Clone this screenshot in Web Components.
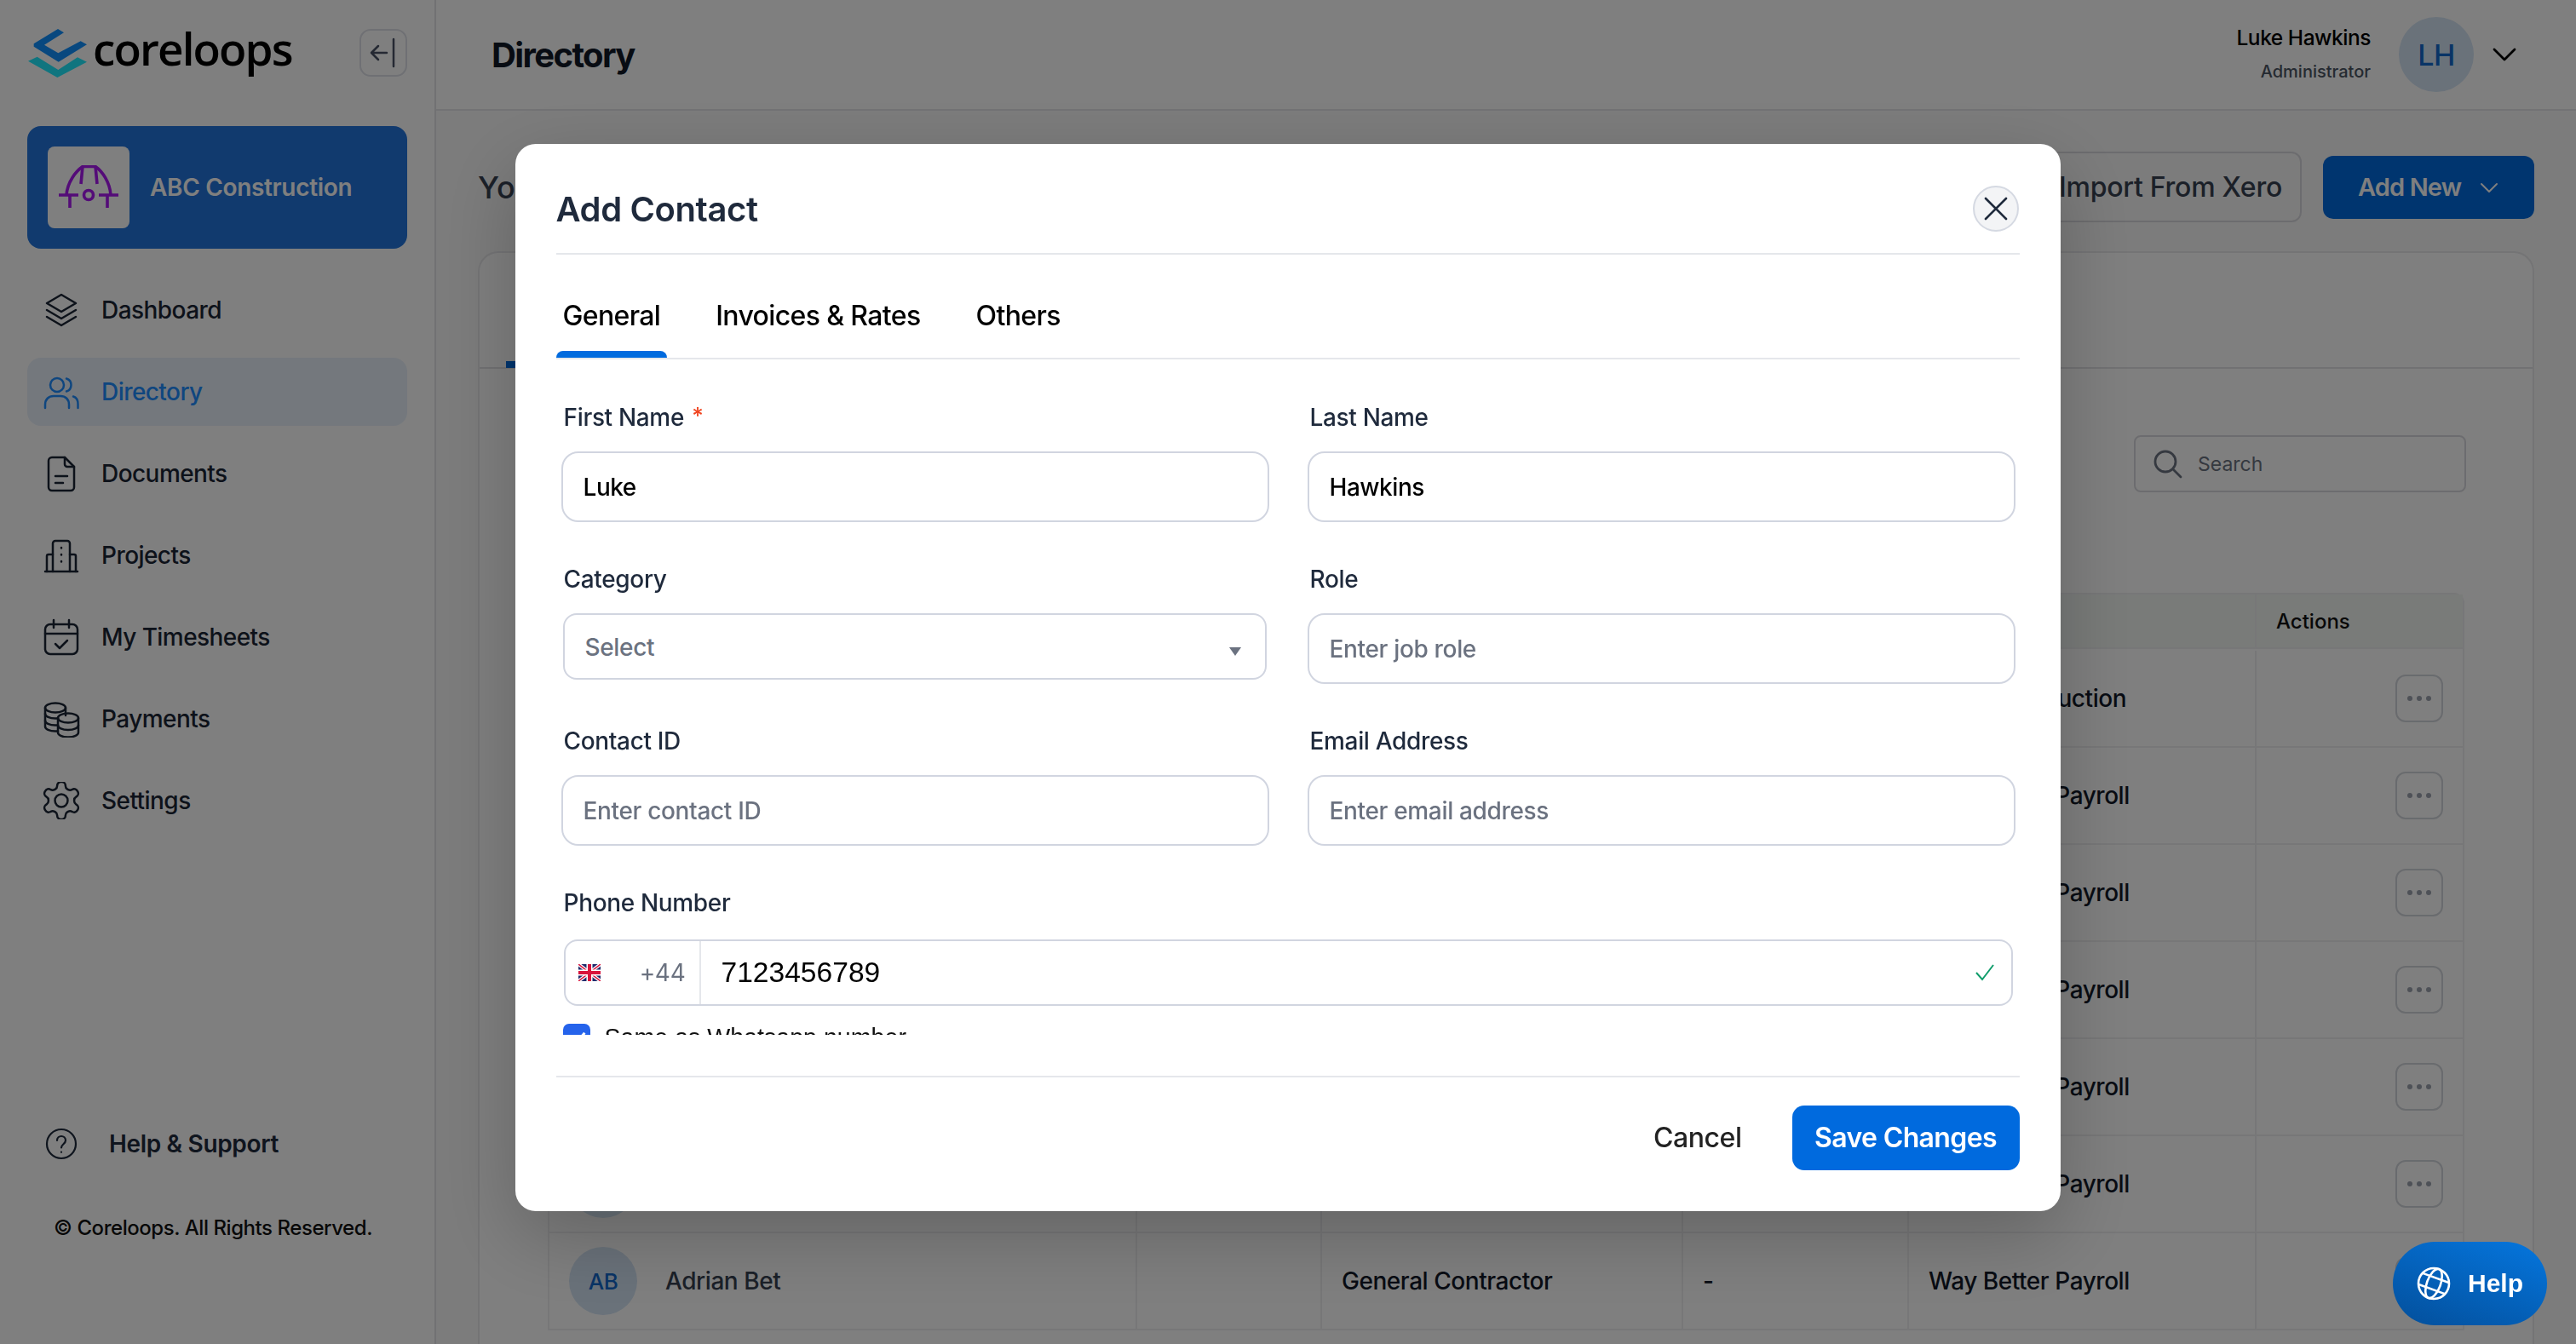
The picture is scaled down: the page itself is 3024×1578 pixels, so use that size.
<!DOCTYPE html>
<html>
<head>
<meta charset="utf-8">
<title>Directory</title>
<style>
  html, body { margin: 0; height: 100%; overflow: hidden; }
  body {
    background: #fff;
    font-family: Inter, "Liberation Sans", sans-serif;
    letter-spacing: -0.45px;
    color: #1f2937;
  }
</style>
</head>
<body>
<app-shell>
  <side-bar slot="side"></side-bar>
  <top-bar slot="top"></top-bar>
  <directory-view slot="main"></directory-view>
</app-shell>
<contact-modal></contact-modal>
<help-button></help-button>

<script>
// every class just clones its own markup into an open shadow root
function shadow(el, html) {
  el.attachShadow({ mode: "open" }).innerHTML = html;
}

const ICONS = {
  dashboard: '<path d="M22 4 39 14 22 24 5 14Z"/><path d="M5 22l17 10 17-10"/><path d="M5 30l17 10 17-10"/>',
  users: '<circle cx="17" cy="14" r="8"/><path d="M28 6.500c3.500 1 5.500 4 5.500 7.500s-2 6.500-5.500 7.500"/><path d="M3 41v-4c0-6 4-10 10-10h8c6 0 10 4 10 10v4"/><path d="M36 27.500c3.500 1 5.500 4.500 5.500 9v4.500"/>',
  doc: '<path d="M11 3h15l11 11v24a4 4 0 0 1-4 4H11a4 4 0 0 1-4-4V7a4 4 0 0 1 4-4Z"/><path d="M26 3v8a3 3 0 0 0 3 3h8"/><path d="M15 25h14M15 33h9"/>',
  building: '<path d="M3 41h38"/><path d="M12 41V8a3 3 0 0 1 3-3h14a3 3 0 0 1 3 3v33"/><path d="M12 21H7a2 2 0 0 0-2 2v18M32 21h5a2 2 0 0 1 2 2v18"/><path d="M22 13v.5M22 21v.5M22 29v.5"/>',
  calendar: '<rect x="3" y="7" width="38" height="35" rx="6"/><path d="M3 18h38M13 2v9M31 2v9"/><path d="M15 30l5 5 9-9"/>',
  coins: '<ellipse cx="15" cy="9" rx="12" ry="5.500"/><path d="M3 9v22c0 3 5 5.500 12 5.500 1 0 2 0 3-.1"/><path d="M3 16c0 3 5 5.500 12 5.500 1 0 2 0 3-.2M3 24c0 3 5 5.500 12 5.500 1 0 2 0 3-.2M27 9v9"/><ellipse cx="30" cy="21" rx="12" ry="5.500"/><path d="M18 21v17c0 3 5 5.500 12 5.500s12-2.500 12-5.500V21"/><path d="M18 29.500c0 3 5 5.500 12 5.500s12-2.500 12-5.500"/>',
  gear: '<g transform="translate(-4.400 -4.400) scale(2.200)"><path d="M12.220 2h-.44a2 2 0 0 0-2 2v.18a2 2 0 0 1-1 1.730l-.43.25a2 2 0 0 1-2 0l-.15-.08a2 2 0 0 0-2.730.73l-.22.38a2 2 0 0 0 .73 2.730l.15.1a2 2 0 0 1 1 1.720v.51a2 2 0 0 1-1 1.740l-.15.09a2 2 0 0 0-.73 2.730l.22.38a2 2 0 0 0 2.730.73l.15-.08a2 2 0 0 1 2 0l.43.25a2 2 0 0 1 1 1.730V20a2 2 0 0 0 2 2h.44a2 2 0 0 0 2-2v-.18a2 2 0 0 1 1-1.730l.43-.25a2 2 0 0 1 2 0l.15.08a2 2 0 0 0 2.730-.73l.22-.39a2 2 0 0 0-.73-2.730l-.15-.08a2 2 0 0 1-1-1.740v-.5a2 2 0 0 1 1-1.740l.15-.09a2 2 0 0 0 .73-2.730l-.22-.38a2 2 0 0 0-2.730-.73l-.15.08a2 2 0 0 1-2 0l-.43-.25a2 2 0 0 1-1-1.730V4a2 2 0 0 0-2-2z" stroke-width="1.140"/><circle cx="12" cy="12" r="3.400" stroke-width="1.140"/></g>'
};

class AppShell extends HTMLElement {
  constructor() {
    super();
    shadow(this, `
      <style>
        :host { display: grid; grid-template-columns: 512px 1fr; grid-template-rows: 130px 1fr; width: 3024px; height: 1578px; overflow: hidden; }
        .side { grid-row: 1 / 3; min-height: 0; }
        .main { min-width: 0; min-height: 0; background: #f8f8f8; overflow: hidden; }
      </style>
      <div class="side"><slot name="side"></slot></div>
      <div><slot name="top"></slot></div>
      <div class="main"><slot name="main"></slot></div>`);
  }
}

class NavItem extends HTMLElement {
  constructor() {
    super();
    const ic = this.getAttribute("icon");
    shadow(this, `
      <style>
        :host { display: flex; align-items: center; gap: 25px; height: 80px; padding-left: 18px; border-radius: 16px; font-size: 28px; font-weight: 450; color: #1b2535; letter-spacing: -0.02em; }
        :host([active]) { background: #e9f1fb; color: #1e8cff; font-weight: 500; }
        svg { width: 44px; height: 44px; flex: none; fill: none; stroke: currentColor; stroke-width: 2.500; stroke-linecap: round; stroke-linejoin: round; }
      </style>
      <svg viewBox="0 0 44 44">${ICONS[ic]}</svg><slot></slot>`);
  }
}

class SideBar extends HTMLElement {
  constructor() {
    super();
    shadow(this, `
      <style>
        :host { display: flex; flex-direction: column; box-sizing: border-box; height: 1578px; padding: 34px 32px 0; background: #fff; border-right: 2px solid #e3e3e6; color: #1b2535; }
        .brand { display: flex; align-items: flex-start; height: 57px; }
        .mark { width: 69px; height: 57px; flex: none; margin-left: 1px; }
        .word { font-family: "Open Sans", sans-serif; font-size: 53px; line-height: 46px; font-weight: 600; color: #000; letter-spacing: -0.035em; margin-left: 7px; }
        .collapse { margin-left: auto; box-sizing: border-box; width: 56px; height: 56px; border: 2px solid #dfe1e8; border-radius: 13px; display: flex; align-items: center; justify-content: center; color: #4a5266; }
        .collapse svg { width: 34px; height: 36px; fill: none; stroke: currentColor; stroke-width: 2.500; stroke-linecap: round; stroke-linejoin: round; }
        .company { margin-top: 57px; height: 144px; background: #2274dc; border-radius: 16px; display: flex; align-items: center; gap: 24px; padding-left: 24px; color: #fff; font-size: 28px; font-weight: 600; letter-spacing: -0.012em; }
        .tile { width: 96px; height: 96px; background: #fff; border-radius: 8px; display: flex; align-items: center; justify-content: center; }
        .tile svg { width: 72px; height: 52px; fill: none; stroke: #a818f0; stroke-width: 3.600; }
        nav { display: flex; flex-direction: column; gap: 16px; margin-top: 32px; }
        .foot { margin-top: auto; padding-bottom: 122px; }
        .help { display: flex; align-items: center; gap: 37px; padding-left: 21px; font-size: 28px; font-weight: 600; color: #1f2a3c; letter-spacing: -0.012em; }
        .help svg { width: 38px; height: 38px; fill: none; stroke: currentColor; stroke-width: 2.200; stroke-linecap: round; }
        .copy { margin-top: 65px; padding-left: 31px; font-size: 24px; font-weight: 450; color: #111; white-space: nowrap; }
      </style>
      <div class="brand">
        <svg class="mark" viewBox="40 42 207 171">
          <path fill="#1090ff" d="M145 42 166 55 97 98 146 127 225 85 247 97 147 158 60 104V94Z"/>
          <path fill="#20eaff" d="M72 140 146 186 214 142 247 158 143 213 40 155Z"/>
        </svg>
        <span class="word">coreloops</span>
        <div class="collapse"><svg viewBox="0 0 34 36"><path d="M29 2v32"/><path d="M21 18H3M11 10l-8 8 8 8"/></svg></div>
      </div>
      <div class="company">
        <div class="tile">
          <svg viewBox="0 0 72 52">
            <path d="M10 35C11 20 21 7 29 1.500H44C52 7 61 20 62 35"/>
            <path d="M29 1.500 27 22M44 1.500 46 22"/>
            <path d="M1 35H24M48 35H71"/>
            <circle cx="36" cy="35" r="5.500"/>
            <path d="M14 36V50M58 36V50"/>
          </svg>
        </div>
        <span>ABC Construction</span>
      </div>
      <nav>
        <nav-item icon="dashboard">Dashboard</nav-item>
        <nav-item icon="users" active>Directory</nav-item>
        <nav-item icon="doc">Documents</nav-item>
        <nav-item icon="building">Projects</nav-item>
        <nav-item icon="calendar">My Timesheets</nav-item>
        <nav-item icon="coins">Payments</nav-item>
        <nav-item icon="gear">Settings</nav-item>
      </nav>
      <div class="foot">
        <div class="help">
          <svg viewBox="0 0 38 38"><circle cx="19" cy="19" r="17"/><path d="M14 15c0-3 2.500-5 5-5s5 2 5 5c0 4-5 4.500-5 8.500"/><path d="M19 28.500v.3"/></svg>
          <span>Help &amp; Support</span>
        </div>
        <div class="copy">© Coreloops. All Rights Reserved.</div>
      </div>`);
  }
}

class TopBar extends HTMLElement {
  constructor() {
    super();
    shadow(this, `
      <style>
        :host { display: flex; align-items: center; box-sizing: border-box; height: 130px; padding: 0 69px 0 65px; background: #fff; border-bottom: 2px solid #e5e5e8; }
        h1 { margin: 0; font-size: 40px; font-weight: 650; color: #111827; letter-spacing: -0.04em; }
        .who { margin-left: auto; text-align: right; }
        .name { font-size: 24.500px; font-weight: 500; color: #000; line-height: 32px; }
        .role { font-size: 20px; font-weight: 450; color: #4b5563; line-height: 32px; margin-top: 8px; letter-spacing: 0; }
        .av { width: 88px; height: 88px; border-radius: 50%; background: #d4e4f4; color: #1268cc; font-size: 34px; font-weight: 450; display: flex; align-items: center; justify-content: center; margin-left: 33px; }
        svg { width: 30px; height: 20px; margin-left: 21px; fill: none; stroke: #000; stroke-width: 2.800; stroke-linecap: round; stroke-linejoin: round; }
      </style>
      <h1>Directory</h1>
      <div class="who"><div class="name">Luke Hawkins</div><div class="role">Administrator</div></div>
      <div class="av">LH</div>
      <svg viewBox="0 0 30 20"><path d="M3 4 15 16 27 4"/></svg>`);
  }
}

class RowAction extends HTMLElement {
  constructor() {
    super();
    shadow(this, `
      <style>
        :host { display: flex; align-items: center; justify-content: center; gap: 5px; box-sizing: border-box; width: 56px; height: 56px; border: 2px solid #d3d6dc; border-radius: 12px; }
        i { width: 6px; height: 6px; border-radius: 50%; background: #9ca3af; }
      </style>
      <i></i><i></i><i></i>`);
  }
}

class DirectoryView extends HTMLElement {
  constructor() {
    super();
    const rows = ["ABC Construction", "Way Better Payroll", "Way Better Payroll", "Way Better Payroll", "Way Better Payroll", "Way Better Payroll"];
    const cells = (a, b, c, d, e) => `
      <div class="c first">${a}</div><div class="c"></div><div class="c">${b}</div><div class="c">${c}</div><div class="c">${d}</div><div class="c act">${e}</div>`;
    const body = rows.map(r => cells('<span class="ava"></span>', "", "", r, "<row-action></row-action>")).join("");
    shadow(this, `
      <style>
        :host { display: block; padding: 48px 49px 0 49px; height: 1448px; box-sizing: border-box; overflow: hidden; }
        .head { display: flex; align-items: center; height: 83px; }
        .lead { font-size: 36px; font-weight: 450; color: #374151; letter-spacing: 0; }
        .import { margin-left: auto; box-sizing: border-box; width: 310px; height: 83px; padding-left: 23px; display: flex; align-items: center; border: 2px solid #d9d9de; border-radius: 12px; font-size: 32px; font-weight: 500; color: #374151; letter-spacing: -0.008em; }
        .add { margin-left: 25px; box-sizing: border-box; width: 248px; height: 74px; padding-left: 41px; gap: 22px; display: flex; align-items: center; background: #006ade; color: #fff; border-radius: 12px; font-size: 29px; font-weight: 600; letter-spacing: -0.03em; }
        .add svg { width: 22px; height: 14px; fill: none; stroke: #fff; stroke-width: 2; stroke-linecap: round; stroke-linejoin: round; }
        .card { margin-top: 34px; border: 2px solid #e8e8eb; border-bottom: 0; border-radius: 24px 24px 0 0; height: 1300px; background: #fff; }
        .tabs { height: 134px; border-bottom: 2px solid #e2e2e6; position: relative; }
        .tabs b { position: absolute; left: 31px; bottom: -1px; width: 120px; height: 8px; background: #006ade; }
        .search { box-sizing: border-box; width: 390px; height: 67px; margin: 78px 78px 0 auto; border: 2px solid #d9d9de; border-radius: 8px; display: flex; align-items: center; gap: 17px; padding-left: 20px; font-size: 23px; color: #6b7280; letter-spacing: 0; }
        .search svg { width: 36px; height: 36px; fill: none; stroke: #6b7280; stroke-width: 2.800; stroke-linecap: round; }
        .grid { margin: 118px 0 0 80px; width: max-content; display: grid; grid-template-columns: 690px 217px 424px 265px 408px 242px; grid-template-rows: 66px; grid-auto-rows: 114px; border: 2px solid #efeff1; border-bottom: 0; border-radius: 12px 12px 0 0; font-size: 28px; font-weight: 450; color: #111827; }
        .th { background: #f2f6f3; height: 64px; display: flex; align-items: center; font-size: 24px; color: #111; border-bottom: 2px solid #efeff1; border-right: 2px solid #efeff1; padding-left: 23px; box-sizing: border-box; letter-spacing: 0; }
        .th:nth-child(6) { border-right: 0; }
        .c { display: flex; align-items: center; padding-left: 23px; border-right: 2px solid #efeff1; border-bottom: 2px solid #efeff1; box-sizing: border-box; }
        .c:nth-child(6n) { border-right: 0; }
        .first { gap: 33px; }
        .act { justify-content: flex-end; padding-right: 23px; }
        .ava { width: 80px; height: 80px; flex: none; border-radius: 50%; background: #d4e4f4; color: #1268cc; font-size: 26px; display: flex; align-items: center; justify-content: center; }
        .nm { color: #374151; }
      </style>
      <div class="head">
        <span class="lead">Your</span>
        <div class="import">Import From Xero</div>
        <div class="add">Add New <svg viewBox="0 0 22 14"><path d="M2 3 11 12 20 3"/></svg></div>
      </div>
      <div class="card">
        <div class="tabs"><b></b></div>
        <div class="search">
          <svg viewBox="0 0 36 36"><circle cx="15" cy="15" r="12"/><path d="M24 24l9 9"/></svg>
          Search
        </div>
        <div class="grid">
          <div class="th"></div><div class="th"></div><div class="th"></div><div class="th"></div><div class="th"></div><div class="th">Actions</div>
          ${body}
          ${cells('<span class="ava">AB</span><span class="nm">Adrian Bet</span>', "General Contractor", "-", "Way Better Payroll", "<row-action></row-action>")}
        </div>
      </div>`);
  }
}

class FormField extends HTMLElement {
  constructor() {
    super();
    const label = this.getAttribute("label");
    const value = this.getAttribute("value");
    const hint = this.getAttribute("hint");
    const req = this.hasAttribute("required") ? ' <span class="req">*</span>' : "";
    const kind = this.getAttribute("kind");
    shadow(this, `
      <style>
        :host { display: block; min-width: 0; }
        label { display: block; height: 35px; line-height: 35px; margin: 0 0 22px 3px; font-size: 28px; font-weight: 500; color: #1f2a3c; letter-spacing: -0.012em; }
        .req { color: #f0441f; font-size: 26px; line-height: 0; vertical-align: 3px; margin-left: 2px; }
        .box { box-sizing: border-box; height: 83px; display: flex; align-items: center; padding-left: 24px; border: 2px solid #d1d5e0; border-radius: 20px; font-size: 28px; background: #fff; }
        .val { color: #000; font-weight: 450; }
        .hint { color: #6b7280; font-weight: 450; letter-spacing: -0.012em; }
        .sel { height: 78px; margin: 3px 3px 0 2px; padding-top: 2px; border-radius: 16px; position: relative; }
        .sel i { position: absolute; right: 28px; top: 38px; border: 7px solid transparent; border-top: 10px solid #6b7280; border-bottom: 0; }
      </style>
      <label>${label}${req}</label>
      <div class="box ${kind === "select" ? "sel" : ""}">
        ${value ? `<span class="val">${value}</span>` : `<span class="hint">${hint}</span>`}
        ${kind === "select" ? "<i></i>" : ""}
      </div>`);
  }
}

class PhoneField extends HTMLElement {
  constructor() {
    super();
    shadow(this, `
      <style>
        :host { display: block; grid-column: 1 / 3; }
        label { display: block; height: 35px; line-height: 35px; margin: 0 0 25px 3px; font-size: 28px; font-weight: 500; color: #1f2a3c; letter-spacing: -0.012em; }
        .box { box-sizing: border-box; height: 78px; margin: 0 3px 0 3px; display: flex; align-items: center; border: 2px solid #d1d5e0; border-radius: 16px; }
        .cc { box-sizing: border-box; width: 159px; height: 74px; display: flex; align-items: center; padding: 0 15px 0 15px; border-right: 2px solid #e5e7eb; color: #6b7280; font-size: 28px; flex: none; letter-spacing: -0.01em; }
        .cc span { margin-left: auto; margin-right: 1px; }
        .flag { width: 26px; height: 20px; display: block; }
        .num { margin-left: 24px; font-family: "Liberation Sans", sans-serif; font-size: 33.600px; color: #000; letter-spacing: 0; }
        .ok { margin-left: auto; margin-right: 19px; width: 24px; height: 22px; fill: none; stroke: #0f9d6b; stroke-width: 2; }
        .same { display: flex; align-items: flex-start; margin: 21px 0 0 2px; gap: 17px; font-family: "Liberation Sans", sans-serif; font-size: 28.600px; line-height: 32px; color: #111; letter-spacing: 0; }
        .same i { width: 32px; height: 32px; border-radius: 7px; background: #2563eb; position: relative; flex: none; }
        .same i::after { content: ""; position: absolute; left: 11px; top: 6px; width: 8px; height: 15px; border: solid #fff; border-width: 0 3px 3px 0; transform: rotate(40deg); }
      </style>
      <label>Phone Number</label>
      <div class="box">
        <div class="cc">
          <svg class="flag" viewBox="0 0 26 20">
            <rect width="26" height="20" fill="#1f2a6b"/>
            <path d="M0 0 26 20M26 0 0 20" stroke="#fff" stroke-width="4"/>
            <path d="M0 0 26 20M26 0 0 20" stroke="#d8143c" stroke-width="1.400"/>
            <path d="M13 0V20M0 10H26" stroke="#fff" stroke-width="7"/>
            <path d="M13 0V20M0 10H26" stroke="#d8143c" stroke-width="4"/>
          </svg>
          <span>+44</span>
        </div>
        <span class="num">7123456789</span>
        <svg class="ok" viewBox="0 0 24 22"><path d="M2 11 9 19 22 2"/></svg>
      </div>
      <div class="same"><i></i><span>Same as Whatsapp number</span></div>`);
  }
}

class ContactModal extends HTMLElement {
  constructor() {
    super();
    shadow(this, `
      <style>
        :host { position: fixed; inset: 0; display: flex; align-items: flex-start; justify-content: center; background: rgba(0,0,0,.5); }
        .dlg { box-sizing: border-box; width: 1814px; height: 1253px; margin: 169px 0 0 -1px; padding: 0 48px; background: #fff; border-radius: 24px; display: flex; flex-direction: column; box-shadow: 0 30px 90px rgba(0,0,0,.22); }
        .hd { flex: none; height: 128px; display: flex; align-items: center; justify-content: space-between; border-bottom: 2px solid #e5e7eb; }
        h2 { margin: 24px 0 0; font-size: 40px; font-weight: 600; color: #1f2a3c; letter-spacing: -0.01em; }
        .x { box-sizing: border-box; width: 54px; height: 54px; margin: 24px 1px 0 0; border-radius: 50%; border: 2px solid #d5d9e2; background: #f3f4f6; display: flex; align-items: center; justify-content: center; }
        .x svg { width: 28px; height: 28px; fill: none; stroke: #1f2a3c; stroke-width: 2.600; stroke-linecap: round; }
        .tabs { flex: none; height: 121px; display: flex; gap: 65px; padding-left: 8px; border-bottom: 2px solid #e5e7eb; font-size: 32px; font-weight: 450; color: #000; letter-spacing: -0.02em; }
        .tabs span { display: flex; align-items: flex-start; height: 121px; padding-top: 54px; box-sizing: border-box; position: relative; line-height: 36px; }
        .tabs .on::after { content: ""; position: absolute; left: -8px; right: -8px; bottom: 0; height: 8px; background: #006ade; border-radius: 8px 8px 0 0; }
        .scroll { flex: none; height: 793px; overflow: hidden; box-sizing: border-box; padding: 51px 5px 0 6px; }
        .form { display: grid; grid-template-columns: 1fr 1fr; column-gap: 45px; row-gap: 50px; }
        .ft { flex: none; margin-top: 48px; border-top: 2px solid #e5e7eb; padding-top: 33px; display: flex; justify-content: flex-end; align-items: center; gap: 59px; font-size: 32px; font-weight: 500; }
        .cancel { color: #222; padding-bottom: 2px; }
        .save { box-sizing: border-box; width: 267px; height: 76px; padding-bottom: 2px; background: #006ade; color: #fff; border-radius: 14px; font-weight: 600; letter-spacing: -0.02em; display: flex; align-items: center; justify-content: center; }
      </style>
      <div class="dlg">
        <div class="hd">
          <h2>Add Contact</h2>
          <div class="x"><svg viewBox="0 0 28 28"><path d="M2 2 26 26M26 2 2 26"/></svg></div>
        </div>
        <div class="tabs"><span class="on">General</span><span>Invoices &amp; Rates</span><span>Others</span></div>
        <div class="scroll">
          <div class="form">
            <form-field label="First Name" value="Luke" required></form-field>
            <form-field label="Last Name" value="Hawkins"></form-field>
            <form-field label="Category" hint="Select" kind="select"></form-field>
            <form-field label="Role" hint="Enter job role"></form-field>
            <form-field label="Contact ID" hint="Enter contact ID"></form-field>
            <form-field label="Email Address" hint="Enter email address"></form-field>
            <phone-field></phone-field>
          </div>
        </div>
        <div class="ft"><span class="cancel">Cancel</span><div class="save">Save Changes</div></div>
      </div>`);
  }
}

class HelpButton extends HTMLElement {
  constructor() {
    super();
    shadow(this, `
      <style>
        :host { position: fixed; left: 2809px; top: 1458px; box-sizing: border-box; width: 181px; height: 98px; border-radius: 49px; background: linear-gradient(200deg, #0576de, #034f9b); display: flex; align-items: center; gap: 20px; padding-left: 28px; color: #fff; font-family: "Liberation Sans", sans-serif; font-size: 30px; font-weight: 700; letter-spacing: 0; }
        svg { width: 40px; height: 40px; fill: none; stroke: #fff; stroke-width: 2.600; }
      </style>
      <svg viewBox="0 0 40 40"><circle cx="20" cy="20" r="18"/><g transform="rotate(20 20 20)"><ellipse cx="20" cy="20" rx="8" ry="18"/><path d="M3 13H37M3 27H37"/></g></svg>
      <span>Help</span>`);
  }
}

customElements.define("nav-item", NavItem);
customElements.define("side-bar", SideBar);
customElements.define("top-bar", TopBar);
customElements.define("row-action", RowAction);
customElements.define("directory-view", DirectoryView);
customElements.define("form-field", FormField);
customElements.define("phone-field", PhoneField);
customElements.define("contact-modal", ContactModal);
customElements.define("help-button", HelpButton);
customElements.define("app-shell", AppShell);
</script>
</body>
</html>
